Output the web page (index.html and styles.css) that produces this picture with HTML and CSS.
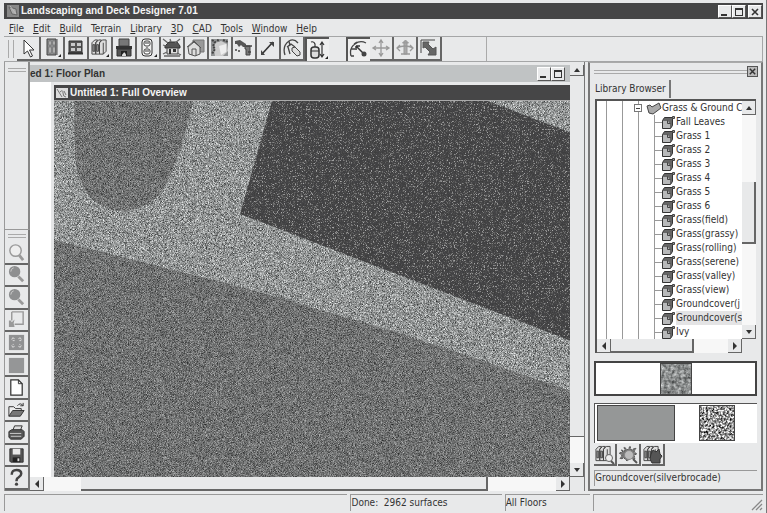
FILE: index.html
```
<!DOCTYPE html>
<html lang="en">
<head>
    <meta charset="UTF-8">
    <meta name="viewport" content="width=device-width, initial-scale=1.0">
    <title>Landscaping and Deck Designer 7.01</title>
    <link rel="stylesheet" href="styles.css">
</head>
<body>
    <!-- shared icons and texture filters -->
    <svg class="defs" width="0" height="0" aria-hidden="true">
        <filter id="gravel" x="0" y="0" width="1" height="1" color-interpolation-filters="sRGB">
            <feTurbulence type="fractalNoise" baseFrequency="1.37 1.61" numOctaves="2" seed="4"/>
            <feColorMatrix values="1.1 0 0 0 0.02  1.1 0 0 0 0.03  1.1 0 0 0 0.03  0 0 0 0 1"/>
            <feComposite in2="SourceAlpha" operator="in"/>
        </filter>
        <filter id="grass" x="0" y="0" width="1" height="1" color-interpolation-filters="sRGB">
            <feTurbulence type="fractalNoise" baseFrequency="1.37 1.61" numOctaves="2" seed="9"/>
            <feColorMatrix values="0.8 0 0 0 0.04  0.8 0 0 0 0.045  0.8 0 0 0 0.045  0 0 0 0 1"/>
            <feComposite in2="SourceAlpha" operator="in"/>
        </filter>
        <filter id="shade" x="0" y="0" width="1" height="1" color-interpolation-filters="sRGB">
            <feTurbulence type="fractalNoise" baseFrequency="1.37 1.61" numOctaves="2" seed="2"/>
            <feColorMatrix values="1.8 0 0 0 -0.42  1.8 0 0 0 -0.42  1.8 0 0 0 -0.42  0 0 0 0 1"/>
            <feComponentTransfer>
                <feFuncR type="table" tableValues="0.24 0.25 0.26 0.30 0.48 0.66"/>
                <feFuncG type="table" tableValues="0.24 0.25 0.26 0.30 0.48 0.66"/>
                <feFuncB type="table" tableValues="0.24 0.25 0.27 0.30 0.48 0.66"/>
            </feComponentTransfer>
            <feComposite in2="SourceAlpha" operator="in"/>
        </filter>
        <filter id="speckle" x="0" y="0" width="1" height="1" color-interpolation-filters="sRGB">
            <feTurbulence type="fractalNoise" baseFrequency="0.47" numOctaves="3" seed="6"/>
            <feColorMatrix values="2 0 0 0 -0.4  2 0 0 0 -0.4  2 0 0 0 -0.4  0 0 0 0 1"/>
        </filter>
        <filter id="cloth" x="0" y="0" width="1" height="1" color-interpolation-filters="sRGB">
            <feTurbulence type="fractalNoise" baseFrequency="0.3" numOctaves="3" seed="3"/>
            <feColorMatrix values="0.8 0 0 0 0.14  0.8 0 0 0 0.15  0.8 0 0 0 0.15  0 0 0 0 1"/>
        </filter>
        <symbol id="i-min" viewBox="0 0 10 10"><path d="M1 7h6v2H1z" fill="#333"/></symbol>
        <symbol id="i-max" viewBox="0 0 10 10"><path d="M1 1h8v8H1zM2 3v5h6V3z" fill="#333" fill-rule="evenodd"/></symbol>
        <symbol id="i-close" viewBox="0 0 10 10"><path d="M2 2l6 6M8 2l-6 6" stroke="#333" stroke-width="1.6"/></symbol>
        <symbol id="i-up" viewBox="0 0 8 8"><path d="M1 6l3-4 3 4z" fill="#333"/></symbol>
        <symbol id="i-down" viewBox="0 0 8 8"><path d="M1 2l3 4 3-4z" fill="#333"/></symbol>
        <symbol id="i-left" viewBox="0 0 8 8"><path d="M6 0L2 4l4 4z" fill="#333"/></symbol>
        <symbol id="i-right" viewBox="0 0 8 8"><path d="M2 0l4 4-4 4z" fill="#333"/></symbol>
        <symbol id="i-plant" viewBox="0 0 14 14">
            <path d="M.5 5.500l2-3h8v8l-2 3h-8z" fill="#666" stroke="#333"/>
            <path d="M1 6h5l2 3v4H1z" fill="#b8b9ba"/>
            <path d="M5.500 5.500v3h3" fill="none" stroke="#444"/>
            <path d="M10.500 1.500h2v2h-2z" fill="#999" stroke="#444"/>
        </symbol>
        <symbol id="i-books" viewBox="0 0 18 18">
            <path d="M1 4l3-3h3l-2 3v12H1zM5 4l3-3h3L9 4v12H5zM9 4l3-3h4v12l-3 3H9z" fill="#ddd" stroke="#444"/>
            <path d="M2 6h2v7H2zM6 6h2v7H6zM13 4v12" fill="#999" stroke="#444"/>
        </symbol>
    </svg>

    <div class="window">
        <header class="titlebar">
            <svg class="app-icon" viewBox="0 0 12 12"><path d="M0 0h12v12H0z" fill="#888"/><path d="M2 2l7 2 1 6-5-1z" fill="#aaa" stroke="#666"/><path d="M3 1l6 8" stroke="#bbb"/></svg>
            <h1>Landscaping and Deck Designer 7.01</h1>
            <div class="caption-buttons">
                <button aria-label="Minimize"><svg><use href="#i-min"/></svg></button>
                <button aria-label="Maximize"><svg><use href="#i-max"/></svg></button>
                <button class="apart" aria-label="Close"><svg><use href="#i-close"/></svg></button>
            </div>
        </header>

        <nav class="menu">
            <button><u>F</u>ile</button>
            <button><u>E</u>dit</button>
            <button><u>B</u>uild</button>
            <button>Te<u>r</u>rain</button>
            <button><u>L</u>ibrary</button>
            <button><u>3</u>D</button>
            <button><u>C</u>AD</button>
            <button><u>T</u>ools</button>
            <button><u>W</u>indow</button>
            <button><u>H</u>elp</button>
        </nav>

        <div class="toolbar">
            <span class="grip"></span>
            <div class="tools tools-main">
                <button aria-label="Select"><svg viewBox="0 0 20 20"><path d="M6 2v14l3.500-3 3 6 2-1-3-6h4.500z" fill="#fff" stroke="#333"/></svg></button>
                <button aria-label="Door"><svg viewBox="0 0 20 20"><path d="M5 1h9v16H5z" fill="#8b8c8d" stroke="#444"/><path d="M7 3h2v4H7zM11 3h2v4h-2zM7 9h2v6H7zM11 9h2v6h-2z" fill="#ccc" stroke="#666" stroke-width=".6"/><path d="M15 1v16" stroke="#555"/><path d="M16 19h3v-3z" fill="#222"/></svg></button>
                <button aria-label="Window"><svg viewBox="0 0 20 20"><path d="M3 3h13v12H3z" fill="#555" stroke="#333"/><path d="M5 5h4v3H5zM11 5h4v3h-4zM5 10h4v3H5zM11 10h4v3h-4z" fill="#c8c9ca"/><path d="M2 15.500h15" stroke="#333" stroke-width="2"/></svg></button>
                <button aria-label="Cabinet"><svg viewBox="0 0 20 20"><use href="#i-books" x="1" y="1" width="17" height="17"/><path d="M16 19h3v-3z" fill="#222"/></svg></button>
                <button aria-label="Fireplace"><svg viewBox="0 0 20 20"><path d="M5 1h10v7H5z" fill="#777" stroke="#444"/><path d="M2 8h16v3H2z" fill="#333"/><path d="M3 11h14v7H3z" fill="#555" stroke="#333"/><path d="M7 13h6v5H7z" fill="#222"/><path d="M8 18c0-3 2-2 2-4 2 2 2 2 2 4z" fill="#ddd"/></svg></button>
                <button aria-label="Electrical"><svg viewBox="0 0 20 20"><rect x="4" y="1" width="10" height="17" rx="3" fill="#eee" stroke="#333"/><rect x="6" y="3" width="6" height="5" rx="2" fill="#fff" stroke="#444"/><rect x="6" y="11" width="6" height="5" rx="2" fill="#fff" stroke="#444"/><path d="M8 4v2M10 4v2M8 12v2M10 12v2M8.500 9.500h1" stroke="#333"/><path d="M16 19h3v-3z" fill="#222"/></svg></button>
                <button aria-label="House"><svg viewBox="0 0 20 20"><path d="M3 8l4-4h8l3 4v2H3z" fill="#555" stroke="#333"/><path d="M5 10h11v6H5z" fill="#ddd" stroke="#444"/><path d="M7 11h2v5H7zM11 11h3v3h-3z" fill="#333"/><path d="M1 1l5 4M8 1l1 3M18 1l-5 4M1 7l3 1M1 16l4-2M19 17l-4-2M2 18h16" stroke="#666" stroke-width="1.300"/></svg></button>
                <button aria-label="Roof"><svg viewBox="0 0 20 20"><path d="M7 2h11v12H7z" fill="#999" stroke="#777"/><path d="M2 9l6-5 6 5v7l-5 2-6-2z" fill="#ddd" stroke="#555"/><path d="M1 9l7-6 7 7M6 17v-6h4v7" fill="none" stroke="#555"/></svg></button>
                <button aria-label="Terrain"><svg viewBox="0 0 20 20"><path d="M1 1h17v17H1z" fill="#909293"/><path d="M5 5l6-2 6 3 1 7-5 5H5l-1-6z" fill="#ccc"/><path d="M9 8l7-2v8l-5 3z" fill="#eee"/><path d="M2 2l3 2-2 4 2 3-3 5M7 2l3 1M13 2l5 2" stroke="#444" stroke-width="2" stroke-dasharray="2 1" fill="none"/></svg></button>
                <button aria-label="Sprinkler"><svg viewBox="0 0 20 20"><path d="M1 3l5-1 6 4v3H9L7 7 5 9 3 6H1z" fill="#555"/><path d="M11 8h5v9h-4V11h-1z" fill="#777" stroke="#444"/><path d="M12 8h6M14 14h3M2 11v2M5 12v2" stroke="#444" stroke-width="1.500" fill="none"/></svg></button>
                <button aria-label="Line"><svg viewBox="0 0 20 20"><path d="M4 16L15 4" stroke="#333" stroke-width="1.600"/><path d="M11 4h5v5zM3 12v5h4z" fill="#444"/></svg></button>
                <button aria-label="Plan view"><svg viewBox="0 0 20 20"><path d="M3 17Q0 8 7 3q5-3 9 2M5 9l4-3 4 3M8 16L6 9M7 3l1 5" fill="none" stroke="#444" stroke-width="1.300"/><path d="M10 10l3-1 5 5v3l-3 1-5-5z" fill="#ddd" stroke="#444"/></svg></button>
                <button class="pressed" aria-label="Mouse mode"><svg viewBox="0 0 20 20"><rect x="3" y="7" width="8" height="11" rx="3" fill="#ddd" stroke="#333" stroke-width="1.500"/><path d="M3 11h8M7 7V4Q6 1 3 2M14 3v13M12 5l2-3 2 3M12 14l2 3 2-3" fill="none" stroke="#333" stroke-width="1.200"/><path d="M17 19h3v-3z" fill="#222"/></svg></button>
            </div>
            <div class="tools tools-edit">
                <button class="pressed" aria-label="Edit curve"><svg viewBox="0 0 20 20"><path d="M2 16Q0 8 6 4q5-4 11-1M5 4l3-2M2 9h4M2 16h3" fill="none" stroke="#444" stroke-width="1.300"/><path d="M7 6l8 8M7 6h4M7 6v4" stroke="#333" stroke-width="1.500"/><circle cx="15" cy="14" r="2.500" fill="#444"/></svg></button>
                <button aria-label="Move"><svg viewBox="0 0 20 20"><path d="M10 2v16M2 10h16M8 5l2-3 2 3M8 15l2 3 2-3M5 8l-3 2 3 2M15 8l3 2-3 2" fill="none" stroke="#999" stroke-width="1.300"/></svg></button>
                <button aria-label="Rotate"><svg viewBox="0 0 20 20"><path d="M9 4h3v12H9zM7.500 5l3-3 3 3z" fill="#aaa" stroke="#999"/><path d="M5 7l-3 3 3 3M2 10q8-4 16 0M15 7l3 3-3 3M6 16h9" fill="none" stroke="#999" stroke-width="1.300"/></svg></button>
                <button aria-label="Resize"><svg viewBox="0 0 20 20"><path d="M2 15V2h14" fill="none" stroke="#444"/><path d="M4 4h6L9 6l5 5 3-2v8h-8l2-3-5-5-2 1z" fill="#666" stroke="#555"/></svg></button>
            </div>
            <span class="divider"></span>
        </div>

        <main class="main">
            <aside class="dock">
                <div class="dock-empty"><span class="grip-h"></span></div>
                <div class="dock-tools">
                    <span class="grip-h"></span>
                    <button aria-label="Zoom"><svg viewBox="0 0 20 20"><circle cx="9" cy="8" r="6" fill="#eee" stroke="#999" stroke-width="1.500"/><path d="M13 13l4 5" stroke="#999" stroke-width="3"/></svg></button>
                    <button aria-label="Zoom in"><svg viewBox="0 0 20 20"><circle cx="8" cy="7" r="6" fill="#8e8f90"/><path d="M7 3q-3 1-3 4" stroke="#ccc" fill="none"/><path d="M12 12l5 5" stroke="#999" stroke-width="3"/></svg></button>
                    <button aria-label="Zoom out"><svg viewBox="0 0 20 20"><circle cx="8" cy="7" r="6" fill="#8e8f90"/><path d="M7 3q-3 1-3 4" stroke="#ccc" fill="none"/><path d="M12 12l5 5" stroke="#999" stroke-width="3"/></svg></button>
                    <button aria-label="Fill window"><svg viewBox="0 0 20 20"><path d="M5 2h12v13H8M5 2v9" fill="none" stroke="#999" stroke-width="1.500"/><path d="M2 11h2l1 2 3-3-1 4 1 4H2z" fill="#999"/></svg></button>
                    <button aria-label="Reference grid"><svg viewBox="0 0 20 20"><path d="M2 2h16v16H2z" fill="#909192"/><path d="M5 7l1-2 2 1M12 6l2-1 1 2M5 13l1 2 2-1M12 14l2 1 1-2M6 8h2M13 8h2M6 12h1M13 12h1" fill="none" stroke="#ddd"/></svg></button>
                    <button aria-label="Color"><svg viewBox="0 0 20 20"><path d="M2 2h16v16H2z" fill="#959697"/></svg></button>
                    <button aria-label="New"><svg viewBox="0 0 20 20"><path d="M4 2h8l4 4v12H4z" fill="#fff" stroke="#333" stroke-width="1.300"/><path d="M12 2v4h4" fill="none" stroke="#333"/></svg></button>
                    <button aria-label="Open"><svg viewBox="0 0 20 20"><path d="M2 16V6h5l2 2h6v3" fill="#eee" stroke="#333"/><path d="M2 16l4-6h12l-4 6z" fill="#777" stroke="#333"/><path d="M11 5q3-4 6 0M17 2v3h-3" fill="none" stroke="#333"/></svg></button>
                    <button aria-label="Print"><svg viewBox="0 0 20 20"><path d="M6 8l2-5h8l-2 5" fill="#ddd" stroke="#333"/><path d="M2 9l3-2h11l2 2v5l-3 3H4l-2-2z" fill="#555" stroke="#333"/><path d="M3 11h12M4 14h11" stroke="#ccc"/></svg></button>
                    <button aria-label="Save"><svg viewBox="0 0 20 20"><path d="M3 3h14v14H4l-1-1z" fill="#555" stroke="#333"/><path d="M6 3h8v6H6z" fill="#e8e8e8"/><path d="M6 12h8v5H6z" fill="#222"/><path d="M11 13h2v3h-2z" fill="#ddd"/></svg></button>
                    <button aria-label="Help"><svg viewBox="0 0 20 20"><path d="M5 7q0-5 5-5t5 4q0 2-3 4-2 1-2 4" fill="none" stroke="#444" stroke-width="2.600"/><circle cx="10" cy="17" r="1.700" fill="#444"/></svg></button>
                </div>
            </aside>

            <section class="workspace">
                <div class="plan">
                    <div class="plan-title">
                        <h2>ed 1: Floor Plan</h2>
                        <div class="caption-buttons">
                            <button aria-label="Minimize plan"><svg><use href="#i-min"/></svg></button>
                            <button aria-label="Maximize plan"><svg><use href="#i-max"/></svg></button>
                        </div>
                    </div>
                    <div class="overview">
                        <div class="overview-title">
                            <svg class="view-icon" viewBox="0 0 12 10"><path d="M0 0h12v10H0z" fill="#ddd"/><path d="M1 1l5 8M4 4q3-3 3 1t3 4M8 3l2 4" fill="none" stroke="#777"/></svg>
                            <h2>Untitled 1: Full Overview</h2>
                        </div>
                        <svg class="scene" viewBox="0 0 517 376" preserveAspectRatio="xMinYMin slice" role="img" aria-label="Garden overview">
                            <rect width="517" height="376" filter="url(#gravel)"/>
                            <path d="M20 0L21 55Q24 84 38 98Q55 112 75 110Q98 104 108 90Q126 60 139 0z" filter="url(#grass)"/>
                            <path d="M218 0L186 113L517 240V32L434 0z" filter="url(#shade)"/>
                            <path d="M0 139L191 187L346 232L517 290V376H0z" filter="url(#grass)"/>
                        </svg>
                    </div>
                </div>
                <div class="vscroll vscroll-plan">
                    <button aria-label="Scroll up"><svg><use href="#i-up"/></svg></button>
                    <span class="thumb"></span>
                    <span class="track"></span>
                    <button aria-label="Scroll down"><svg><use href="#i-down"/></svg></button>
                </div>
                <div class="hscroll hscroll-plan">
                    <button aria-label="Scroll left"><svg><use href="#i-left"/></svg></button>
                    <span class="track-start"></span>
                    <span class="thumb"></span>
                    <span class="track"></span>
                    <button aria-label="Scroll right"><svg><use href="#i-right"/></svg></button>
                </div>
            </section>

            <aside class="library">
                <div class="library-head">
                    <span class="grip-h"></span>
                    <button class="close" aria-label="Close library"><svg><use href="#i-close"/></svg></button>
                </div>
                <button class="tab">Library Browser</button>
                <div class="tree-box">
                    <ul class="tree">
                        <li class="folder"><span class="minus"></span><svg viewBox="0 0 16 14"><path d="M1 5l3-1 2 2 7-4 2 5-8 6-4-1z" fill="#aaa" stroke="#444"/></svg>Grass &amp; Ground Co</li>
                        <li><svg><use href="#i-plant"/></svg><span>Fall Leaves</span></li>
                        <li><svg><use href="#i-plant"/></svg><span>Grass 1</span></li>
                        <li><svg><use href="#i-plant"/></svg><span>Grass 2</span></li>
                        <li><svg><use href="#i-plant"/></svg><span>Grass 3</span></li>
                        <li><svg><use href="#i-plant"/></svg><span>Grass 4</span></li>
                        <li><svg><use href="#i-plant"/></svg><span>Grass 5</span></li>
                        <li><svg><use href="#i-plant"/></svg><span>Grass 6</span></li>
                        <li><svg><use href="#i-plant"/></svg><span>Grass(field)</span></li>
                        <li><svg><use href="#i-plant"/></svg><span>Grass(grassy)</span></li>
                        <li><svg><use href="#i-plant"/></svg><span>Grass(rolling)</span></li>
                        <li><svg><use href="#i-plant"/></svg><span>Grass(serene)</span></li>
                        <li><svg><use href="#i-plant"/></svg><span>Grass(valley)</span></li>
                        <li><svg><use href="#i-plant"/></svg><span>Grass(view)</span></li>
                        <li><svg><use href="#i-plant"/></svg><span>Groundcover(j</span></li>
                        <li class="selected"><svg><use href="#i-plant"/></svg><span>Groundcover(s</span></li>
                        <li><svg><use href="#i-plant"/></svg><span>Ivy</span></li>
                    </ul>
                    <div class="vscroll vscroll-tree">
                        <button aria-label="Tree up"><svg><use href="#i-up"/></svg></button>
                        <span class="track-start"></span>
                        <span class="thumb"></span>
                        <span class="track"></span>
                        <button aria-label="Tree down"><svg><use href="#i-down"/></svg></button>
                    </div>
                    <div class="hscroll hscroll-tree">
                        <button aria-label="Tree left"><svg><use href="#i-left"/></svg></button>
                        <span class="thumb"></span>
                        <span class="track"></span>
                        <button aria-label="Tree right"><svg><use href="#i-right"/></svg></button>
                    </div>
                </div>
                <div class="preview">
                    <svg class="swatch swatch-small" viewBox="0 0 30 30"><rect width="30" height="30" filter="url(#cloth)"/></svg>
                </div>
                <div class="materials">
                    <span class="color"></span>
                    <svg class="swatch" viewBox="0 0 34 34"><rect width="34" height="34" filter="url(#speckle)"/></svg>
                </div>
                <div class="library-tools">
                    <button aria-label="Search library"><svg viewBox="0 0 20 20"><use href="#i-books" x="0" y="0" width="17" height="18"/><circle cx="14" cy="13" r="3.500" fill="#eee" stroke="#666"/><path d="M16 16l3 3" stroke="#555" stroke-width="2"/></svg></button>
                    <button aria-label="Plant chooser"><svg viewBox="0 0 20 20"><path d="M2 5l4 1-1-4 4 3 2-4 1 4 5-2-2 4 3 2-3 1 1 4-4-1-4 3-3-3-4 1 2-4-3-2 4-1z" fill="#777" stroke="#555" stroke-dasharray="2 1"/><circle cx="10" cy="10" r="4.500" fill="#bbb" stroke="#888"/><path d="M14 14l4 4" stroke="#555" stroke-width="2"/></svg></button>
                    <button aria-label="Plant library"><svg viewBox="0 0 20 20"><use href="#i-books" x="0" y="0" width="17" height="18"/><path d="M8 9l2-4 3 2 3-3 1 5 2 2-2 3v4H9l-2-4z" fill="#555" stroke="#333"/></svg></button>
                </div>
                <p class="library-caption">Groundcover(silverbrocade)</p>
            </aside>
        </main>

        <footer class="status">
            <span></span>
            <span>Done:&nbsp; 2962 surfaces</span>
            <span>All Floors</span>
            <span><svg class="sizer" viewBox="0 0 12 12"><path d="M1 11L11 1M5 11l6-6M9 11l2-2" stroke="#888" stroke-width="1.300"/></svg></span>
        </footer>
    </div>
</body>
</html>
```
FILE: styles.css
```
* { box-sizing: border-box; }
body { margin: 0; background: #e8e9ea; color: #333; font: 10px/14px "DejaVu Sans Condensed", "DejaVu Sans", sans-serif; }
h1, h2, p, ul { margin: 0; padding: 0; }
h1, h2 { font: bold 10px/14px "Liberation Sans", Arial, sans-serif; white-space: nowrap; }
button { margin: 0; padding: 0; border: 0; background: #e8e9ea; color: inherit; font: inherit; }
svg { display: block; }
.defs { position: absolute; }

.window { display: flex; flex-direction: column; height: 100vh; min-height: 513px; padding: 3px 3px 2px 4px; border-right: 1px solid #777; }

/* title bars */
.titlebar { display: flex; align-items: center; gap: 2px; height: 16px; padding: 0 1px 0 3px; background: #464647; color: #f4f4f4; }
.app-icon { width: 12px; height: 12px; }
.caption-buttons { display: flex; margin-left: auto; }
.caption-buttons button { width: 14px; height: 13px; padding: 1px; border: 1px solid #555; border-top-color: #fff; border-left-color: #fff; }
.caption-buttons .apart { margin-left: 2px; }
.caption-buttons svg { width: 10px; height: 10px; }

.menu { display: flex; gap: 9px; height: 17px; padding: 1px 5px 0; }
.menu button { line-height: 15px; background: none; }
.menu u { text-underline-offset: 1px; }

/* toolbar */
.toolbar { display: flex; height: 26px; padding-left: 4px; border: 1px solid #a5a6a7; border-width: 1px 1px 1px 0; }
.grip { width: 6px; height: 18px; margin: 3px 3px 0 0; border: 1px solid #aaa; border-width: 0 1px; }
.tools { display: grid; grid-auto-flow: column; grid-auto-columns: 1fr; }
.tools-main { width: 305px; }
.tools-edit { width: 94px; margin-left: 24px; }
.tools button, .library-tools button { padding: 1px; border: 1px solid #666; border-width: 0 2px 2px 0; }
.tools svg { width: 20px; height: 20px; }
.tools .pressed { border-color: #555; border-width: 2px 0 0 2px; background: #efefef; }
.divider { width: 1px; margin-left: 46px; background: #aaa; }

.main { display: flex; flex: 1; min-height: 0; }

/* left dock */
.dock { display: flex; flex-direction: column; width: 26px; border-left: 1px solid #999; }
.dock-empty { flex: 1; padding: 6px 2px 0 3px; border-right: 2px solid #888; border-bottom: 1px solid #999; }
.grip-h { display: block; height: 4px; border: 1px solid #aaa; border-width: 1px 0; }
.dock-tools { display: flex; flex-direction: column; height: 261px; padding-top: 4px; border-right: 2px solid #777; border-bottom: 1px solid #777; }
.dock-tools .grip-h { margin: 0 2px 4px 3px; }
.dock-tools button { flex: 1; min-height: 0; padding: 0 2px; border-bottom: 2px solid #666; }
.dock-tools svg { width: 19px; height: 19px; margin: auto; }

/* workspace */
.workspace { display: grid; flex: 1; grid-template-columns: 1fr 14px; grid-template-rows: 1fr 14px; min-width: 0; padding-top: 3px; border-right: 1px solid #777; }
.plan { display: flex; flex-direction: column; min-width: 0; min-height: 0; overflow: hidden; background: #fff; }
.plan-title { display: flex; align-items: center; height: 17px; padding-right: 5px; background: #c0c3c4; }
.plan-title .caption-buttons { background: #e8e9ea; }
.plan-title .caption-buttons button { height: 14px; }
.overview { display: flex; flex: 1; flex-direction: column; min-height: 0; margin-left: 21px; padding-top: 3px; border-left: 3px solid #e4e5e6; background: #e8e9ea; }
.overview-title { display: flex; align-items: center; gap: 2px; height: 16px; padding-left: 2px; border-bottom: 1px solid #aaa; background: #464647; color: #f4f4f4; }
.view-icon { width: 12px; height: 10px; }
.scene { width: 100%; flex: 1; min-height: 0; }

/* scroll bars */
.vscroll, .hscroll { display: flex; background: #f7f7f7; }
.vscroll { flex-direction: column; }
.vscroll button, .hscroll button { flex: none; display: grid; place-items: center; width: 14px; height: 14px; border: 1px solid #666; border-width: 0 1px 1px 0; }
.vscroll svg, .hscroll svg { width: 8px; height: 8px; }
.thumb { border: 1px solid #666; border-width: 0 2px 2px 0; background: #e8e9ea; }
.track { flex: 1; }
.vscroll-plan button:first-child { height: 11px; }
.vscroll-plan .thumb { flex: 14; border-width: 0 0 1px 0; }
.hscroll-plan { grid-column: 1; }
.hscroll-plan .track-start { width: 37px; }
.hscroll-plan .thumb { flex: 6; }

/* library */
.library { display: flex; flex-direction: column; flex: none; width: 175px; margin-left: 3px; padding: 3px 3px 3px 4px; border: 2px solid #777; border-top: 1px solid #aaa; }
.library-head { display: flex; align-items: center; height: 11px; }
.library-head .grip-h { flex: 1; }
.close { width: 11px; height: 11px; border: 1px solid #555; background: #bbb; }
.close svg { width: 9px; height: 9px; }
.tab { align-self: flex-start; height: 18px; margin: 3px 0 1px; padding: 0 3px 0 1px; border-right: 2px solid #777; line-height: 16px; }
.tree-box { display: grid; flex: 1; grid-template-columns: 1fr 14px; grid-template-rows: 1fr 14px; min-height: 0; margin: 0 2px 0 1px; border: 2px solid #555; border-width: 2px 0 0 2px; }
.tree { overflow: hidden; list-style: none; white-space: nowrap; background: linear-gradient(#999, #999) 9px 0 / 1px 100% no-repeat, linear-gradient(#999, #999) 25px 0 / 1px 100% no-repeat, linear-gradient(#999, #999) 41px 0 / 1px 100% no-repeat, linear-gradient(#999, #999) 57px 14px / 1px 100% no-repeat, #fff; }
.tree li { display: flex; align-items: center; height: 14px; padding-left: 57px; }
.tree li::before { content: ""; flex: none; width: 8px; height: 1px; background: #999; }
.tree li svg { flex: none; width: 14px; height: 14px; }
.tree li span { line-height: 14px; }
.tree .selected span { flex: 1; background: #e4e4e5; }
.tree .folder { padding-left: 37px; }
.tree .folder::before { display: none; }
.tree .folder svg { width: 16px; margin: 0 0 0 4px; }
.tree .folder .minus { flex: none; width: 8px; height: 8px; border: 1px solid #777; background: linear-gradient(#444, #444) center / 4px 1px no-repeat #fff; }
.vscroll-tree .track-start { flex: 68; }
.vscroll-tree .thumb { flex: 60; }
.vscroll-tree .track { flex: 82; }
.hscroll-tree .thumb { flex: 84; }
.hscroll-tree .track { flex: 35; }
.preview { display: grid; place-items: center; height: 35px; margin: 8px 1px 7px 0; border: 2px solid #444; background: #fff; }
.swatch { width: 36px; height: 36px; border: 1px solid #444; }
.swatch-small { width: 32px; height: 32px; }
.materials { display: flex; gap: 24px; height: 40px; margin-right: 1px; padding: 1px 0 0 2px; border: 1px solid #555; border-width: 1px 0 0 1px; background: #fff; }
.color { flex: none; width: 78px; height: 36px; border: 1px solid #444; background: #959797; }
.library-tools { display: flex; gap: 1px; height: 22px; margin: 1px 0 4px; }
.library-tools button { width: 23px; }
.library-tools svg { width: 20px; height: 20px; }
.library-caption { height: 16px; margin-right: 1px; border: 1px solid #999; border-width: 1px 0 0 1px; }

/* status bar */
.status { display: grid; grid-template-columns: 343fr 151fr 85fr 170fr; gap: 3px; height: 17px; margin-top: 3px; }
.status span { position: relative; border: 1px solid #999; border-width: 1px 0 0 1px; line-height: 16px; white-space: nowrap; }
.sizer { position: absolute; right: 0; bottom: 0; width: 12px; height: 12px; }
```
